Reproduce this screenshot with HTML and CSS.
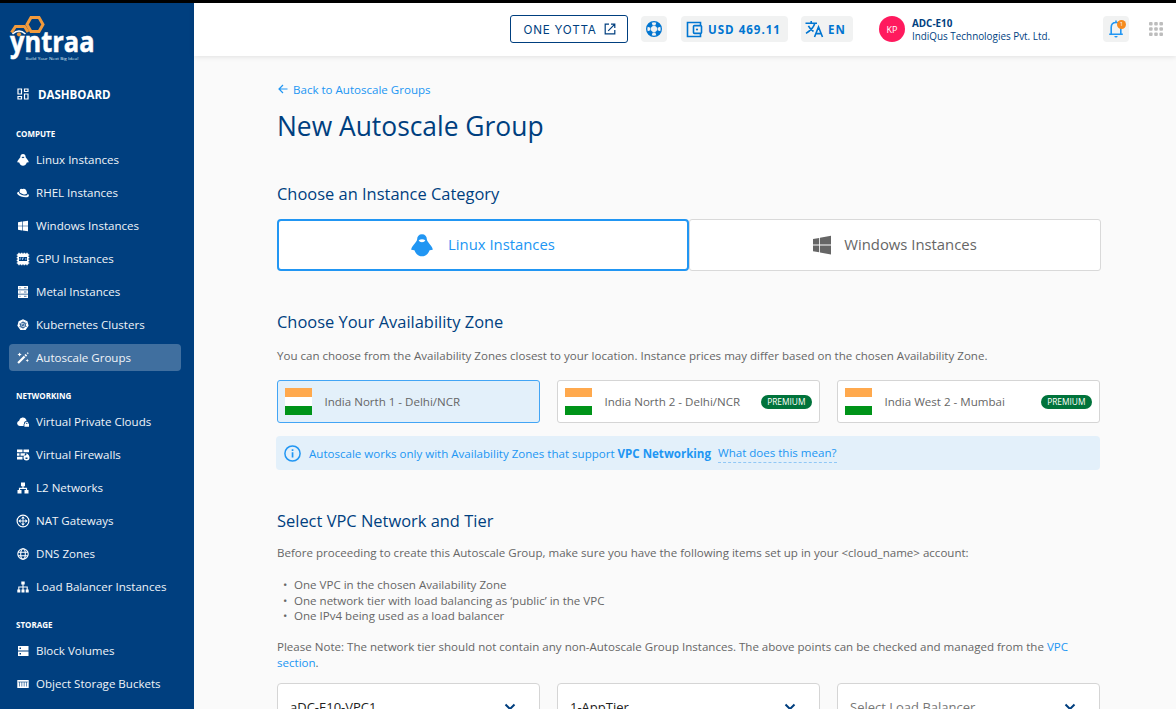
FILE: index.html
```html
<!DOCTYPE html>
<html lang="en">
<head>
<meta charset="utf-8">
<title>New Autoscale Group</title>
<link rel="stylesheet" href="styles.css">
</head>
<body>
<div class="app">
  <aside class="sidebar">
    <svg class="logo" width="90" height="50" viewBox="0 0 90 50" role="img" aria-label="yntraa">
      <text class="logo-word" x="1" y="37.500" textLength="84.500" lengthAdjust="spacingAndGlyphs">yntraa</text>
      <path d="M22 3.500h8l4 7-4 7h-8l-4-7z" fill="none" stroke="#f29a3c" stroke-width="3"/>
      <path d="M2.500 18.500L6.500 12.500h9l3.500 5.500" fill="none" stroke="#f29a3c" stroke-width="3"/>
      <path d="M3.500 20q6.500-6 13 0" fill="none" stroke="#fff" stroke-width="1.500"/>
      <circle cx="10" cy="20.300" r="2.100" fill="#f29a3c"/>
      <text class="logo-tag" x="16.500" y="45.800" textLength="53" lengthAdjust="spacingAndGlyphs">Build Your Next Big Idea!</text>
    </svg>
    <a class="dash"><svg class="ico" viewBox="0 0 12 12"><path d="M1 1h3.500v5H1zM7.500 1H11v2.500H7.500zM7.500 6H11v5H7.500zM1 8.500h3.500V11H1z" fill="none" stroke="#fff" stroke-width="1.200"/></svg><span>DASHBOARD</span></a>

    <h4 class="group">COMPUTE</h4>
    <a class="item"><svg class="ico" viewBox="0 0 12 12"><path fill-rule="evenodd" d="M6 0C4.400 0 3.400 1.200 3.300 3.200 2.600 4.700.5 6 .2 8.200l2 .4C3 10.700 4.300 11.800 6 11.800s3-1.100 3.800-3.200l2-.4C11.500 6 9.400 4.700 8.700 3.200 8.600 1.200 7.600 0 6 0zM4.500 3.100Q6 2.200 7.500 3.100 7 4.200 6 4.200T4.500 3.100z"/></svg><span>Linux Instances</span></a>
    <a class="item"><svg class="ico" viewBox="0 0 12 12"><path d="M3 2.500C4 1 5 2.300 6 2c2-.6 3.500.8 4 4 .2 1.300-2 1.800-4 1.200C4 6.700 2.300 5.600 2.500 4.600z"/><path d="M2 4.700C.3 4.800-.4 6 .6 7.300c1.900 2.400 8.400 4 10.700 2.400 1.200-.9.5-2.400-.7-3 .4 1.700-2 2.300-4.600 1.600C3.500 7.600 1.500 6.200 2 4.700z"/></svg><span>RHEL Instances</span></a>
    <a class="item"><svg class="ico" viewBox="0 0 12 12"><path d="M1 2.200l4-.6v4.100H1zM5.600 1.500L11 .7v5H5.600zM1 6.300h4v4.100l-4-.6zM5.600 6.300H11v5l-5.400-.8z"/></svg><span>Windows Instances</span></a>
    <a class="item"><svg class="ico big" viewBox="0 0 14 14"><path d="M3 .7v12.600M5.700.7v12.600M8.300.7v12.600M11 .7v12.600M.7 3h12.600M.7 5.700h12.600M.7 8.300h12.600M.7 11h12.600" stroke="#fff" stroke-width="1.200"/><rect x="1.500" y="1.500" width="11" height="11" rx="1"/><rect x="3" y="5" width="8" height="4" fill="#003f7f"/><path d="M4 8V6h1.200M6.500 8V6H8M9.800 6v2" fill="none" stroke="#9dc0e4" stroke-width=".9"/></svg><span>GPU Instances</span></a>
    <a class="item"><svg class="ico" viewBox="0 0 12 12"><path d="M1 0h10v3.400H1zM1 4.300h10v3.400H1zM1 8.600h10V12H1z"/><path d="M2.500 1.700h1M7 1.700h2.500M2.500 6h1M7 6h2.500M2.500 10.300h1M7 10.300h2.500" stroke="#003f7f" stroke-width=".7"/></svg><span>Metal Instances</span></a>
    <a class="item"><svg class="ico" viewBox="0 0 12 12"><path d="M6 .3l4.400 2 1.200 4.500-3 4.300H3.400l-3-4.300 1.200-4.500z"/><circle cx="6" cy="6" r="2.700" fill="none" stroke="#003f7f" stroke-width=".7"/><path d="M6 1.800v8.400M2 4.800l8 2.800M2.200 7.800l7.600-3.600M3.500 9.200l5-6.400" stroke="#003f7f" stroke-width=".5"/></svg><span>Kubernetes Clusters</span></a>
    <a class="item active"><svg class="ico" viewBox="0 0 12 12"><path d="M.3 10.200l6.500-6.500 1.600 1.600-6.500 6.500z"/><path d="M7.400 3.100l1.200-1.200 1.600 1.600L9 4.700zM2.600.4l.7 1.400 1.400.7-1.400.7-.7 1.400-.7-1.400L.5 2.500l1.400-.7zM10.300 6.800l.5 1.200 1.200.5-1.200.5-.5 1.200-.5-1.200-1.200-.5 1.200-.5zM10.800 0l.4.800.8.400-.8.400-.4.800-.4-.8-.8-.4.800-.4z"/></svg><span>Autoscale Groups</span></a>

    <h4 class="group">NETWORKING</h4>
    <a class="item"><svg class="ico" viewBox="0 0 12 12"><path d="M6.600 10H2.700a2.700 2.700 0 0 1-.6-5.300A3.800 3.800 0 0 1 9.300 3.800Q9.500 4.500 9.400 4.900 7 5 7 7.700 6.500 8 6.600 10z"/><path fill-rule="evenodd" d="M7.400 7.700h.6c0-2.500 3.400-2.500 3.400 0h.6v3H7.400zM8.800 7.700h1.800c0-1.200-1.800-1.200-1.800 0z"/></svg><span>Virtual Private Clouds</span></a>
    <a class="item"><svg class="ico big" viewBox="0 0 14 14"><path d="M1 1.500h5.500v2.700H1zM7.500 1.500h5.500v2.700H7.500zM1 5.200h2.500v2.600H1zM4.500 5.200h5L8 7.800H4.500zM1 8.800h5.500v2.700H1z"/><path fill-rule="evenodd" d="M10.500 5c2.200 1.700 3 3 3 4.600a3 3 0 0 1-6 0c0-1.200.6-2 1.500-2.600.3.600.7.600.9.500.5-.6.700-1.400.6-2.500zM9.500 9.500v1.600h2V9.500z"/></svg><span>Virtual Firewalls</span></a>
    <a class="item"><svg class="ico" viewBox="0 0 12 12"><path d="M4 .5h4v3.800H4zM.5 8h4v3.500h-4zM7.500 8h4v3.500h-4z"/><path d="M6 4v2.300M2.500 8V6.300h7V8" fill="none" stroke="#fff" stroke-width="1.200"/></svg><span>L2 Networks</span></a>
    <a class="item"><svg class="ico big" viewBox="0 0 14 14"><circle cx="7" cy="7" r="5.900" fill="none" stroke="#fff" stroke-width="1.200"/><path d="M7 2.300l1.900 2.300H5.100zM7 11.700l1.900-2.300H5.100zM2.300 7l2.300-1.900v3.800zM11.700 7L9.400 5.100v3.800z"/><path d="M7 4v6M4 7h6" stroke="#fff" stroke-width=".9"/></svg><span>NAT Gateways</span></a>
    <a class="item"><svg class="ico" viewBox="0 0 12 12"><g fill="none" stroke="#fff" stroke-width="1.100"><circle cx="6" cy="6" r="5.200"/><ellipse cx="6" cy="6" rx="2.300" ry="5.200"/><path d="M1 4.200h10M1 7.800h10"/></g></svg><span>DNS Zones</span></a>
    <a class="item"><svg class="ico" viewBox="0 0 12 12"><path d="M4.300.5h3.400v3H4.300zM.3 8.500h3v3h-3zM4.500 8.500h3v3h-3zM8.700 8.500h3v3h-3z"/><path d="M6 3v6M1.800 9V6h8.400v3" fill="none" stroke="#fff" stroke-width="1.100"/></svg><span>Load Balancer Instances</span></a>

    <h4 class="group">STORAGE</h4>
    <a class="item"><svg class="ico" viewBox="0 0 12 12"><path d="M1 1h10.500v4.500H1zM1 6.500h10.500V11H1z"/><path d="M2.500 2.500H4V4H2.500zM2.500 8H4v1.500H2.500z" fill="#003f7f"/></svg><span>Block Volumes</span></a>
    <a class="item"><svg class="ico" viewBox="0 0 12 12"><path d="M.3 2h11.400v8H.3z"/><path d="M1.300 4h9.400M2.500 4v4.500M4.800 4v4.500M7.200 4v4.500M9.500 4v4.500" stroke="#003f7f" stroke-width=".6"/></svg><span>Object Storage Buckets</span></a>
  </aside>

  <div class="page">
    <header class="topbar">
      <a class="yotta"><span>ONE YOTTA</span><svg width="12" height="12" viewBox="0 0 12 12" fill="none" stroke="#003f7f" stroke-width="1.200"><path d="M5 1.200H1.200v9.600h9.600V7M7 1.200h3.800V5M10.600 1.400L4.200 7.800"/></svg></a>
      <a class="chip help"><svg width="18" height="18" viewBox="0 0 18 18"><circle cx="9" cy="9" r="5.500" fill="none" stroke="#0075d1" stroke-width="5"/><g fill="#f1f2f2"><path d="M6.700 2.700Q9 1.900 11.300 2.700L10.300 5.400H7.700zM6.700 15.300Q9 16.100 11.300 15.300L10.300 12.600H7.700zM2.700 6.700Q1.900 9 2.700 11.300L5.400 10.300V7.700zM15.300 6.700Q16.100 9 15.300 11.300L12.600 10.300V7.700z"/></g><circle cx="9" cy="9" r="2.700" fill="#f1f2f2"/></svg></a>
      <a class="chip wallet"><svg width="17" height="17" viewBox="0 0 17 17" fill="none" stroke="#0075d1" stroke-width="1.600"><path d="M14.500 4V1.500H1.500v14h13V13"/><rect x="7.500" y="4.600" width="8" height="7.800" rx="1"/><circle cx="11" cy="8.500" r="1.100" fill="#0075d1" stroke="none"/></svg><span>USD 469.11</span></a>
      <a class="chip lang"><svg width="19" height="18" viewBox="0 0 19 18" fill="none" stroke="#0075d1" stroke-width="1.600"><path d="M.5 3.300h11.500M6.200 1v2.300M9.800 3.300Q8.500 8.700 1 13.400M3.400 5.800Q5 9 8.500 11.500M9.500 17l4-10 4 10M11 13.600h5.200"/></svg><span>EN</span></a>
      <div class="avatar">KP</div>
      <div class="account"><b>ADC-E10</b><span>IndiQus Technologies Pvt. Ltd.</span></div>
      <a class="chip bell"><svg width="20" height="22" viewBox="0 0 20 22"><path d="M2.200 16.200h13.600M4.200 16V9.500Q4.200 4.500 9 4.500T13.800 9.500V16M9 2.500v2" fill="none" stroke="#2196f3" stroke-width="1.600"/><path d="M7.300 17.900h3.400Q10.500 19.600 9 19.600T7.300 17.900z" fill="#2196f3"/></svg><span class="badge">1</span></a>
      <svg class="dots" width="14" height="14" viewBox="0 0 14 14" fill="#bdbdbd"><rect width="3.600" height="3.600" rx="1"/><rect x="5.200" width="3.600" height="3.600" rx="1"/><rect x="10.400" width="3.600" height="3.600" rx="1"/><rect y="5.200" width="3.600" height="3.600" rx="1"/><rect x="5.200" y="5.200" width="3.600" height="3.600" rx="1"/><rect x="10.400" y="5.200" width="3.600" height="3.600" rx="1"/><rect y="10.400" width="3.600" height="3.600" rx="1"/><rect x="5.200" y="10.400" width="3.600" height="3.600" rx="1"/><rect x="10.400" y="10.400" width="3.600" height="3.600" rx="1"/></svg>
    </header>

    <main class="content">
      <a class="back"><svg width="10" height="10" viewBox="0 0 10 10" fill="none" stroke="#2196f3" stroke-width="1.200"><path d="M9.500 5H1.200M5 1L1 5l4 4"/></svg><span>Back to Autoscale Groups</span></a>
      <h1>New Autoscale Group</h1>

      <h2 class="h-category">Choose an Instance Category</h2>
      <div class="categories">
        <div class="category selected"><svg width="22" height="23" viewBox="0 0 22 23" fill="#2196f3"><path fill-rule="evenodd" d="M11 .3C8 .3 6.200 2.300 6.100 5.600 5.600 8.800.8 11.500.2 15.700l3.200.6C4.800 20 7.500 22.300 11 22.300s6.200-2.300 7.600-6l3.200-.6C21.200 11.500 16.400 8.800 15.900 5.600 15.800 2.300 14 .3 11 .3zM7.600 6.300Q11 4 14.400 6.300 13.500 8.300 11 8.300T7.600 6.300z"/></svg><span>Linux Instances</span></div>
        <div class="category"><svg width="18" height="20" viewBox="0 0 18 20" fill="#666"><path d="M0 4l6.200-1v6.400H0zM7 2.800L18 .8v8.600H7zM0 10.600h6.200v6.600L0 16.200zM7 10.600h11v9L7 17.500z"/></svg><span>Windows Instances</span></div>
      </div>

      <h2 class="h-zone">Choose Your Availability Zone</h2>
      <p class="zone-text">You can choose from the Availability Zones closest to your location. Instance prices may differ based on the chosen Availability Zone.</p>
      <div class="zones">
        <div class="zone selected"><i class="flag"></i><span>India North 1 - Delhi/NCR</span></div>
        <div class="zone"><i class="flag"></i><span>India North 2 - Delhi/NCR</span><em>PREMIUM</em></div>
        <div class="zone"><i class="flag"></i><span>India West 2 - Mumbai</span><em>PREMIUM</em></div>
      </div>
      <div class="notice"><svg width="17" height="17" viewBox="0 0 17 17"><circle cx="8.500" cy="8.500" r="7.600" fill="none" stroke="#2196f3" stroke-width="1.500"/><path d="M7.700 4.300h1.700v1.700H7.700zM7.700 7.300h1.700v5.200H7.700z" fill="#2196f3"/></svg><span class="notice-text">Autoscale works only with Availability Zones that support <b>VPC Networking</b></span><a>What does this mean?</a></div>

      <h2 class="h-vpc">Select VPC Network and Tier</h2>
      <p class="vpc-text">Before proceeding to create this Autoscale Group, make sure you have the following items set up in your &lt;cloud_name&gt; account:</p>
      <ul>
        <li>One VPC in the chosen Availability Zone</li>
        <li>One network tier with load balancing as ‘public’ in the VPC</li>
        <li>One IPv4 being used as a load balancer</li>
      </ul>
      <p class="note">Please Note: The network tier should not contain any non-Autoscale Group Instances. The above points can be checked and managed from the <a>VPC<br>section</a>.</p>
      <div class="selects">
        <div class="select"><span>aDC-E10-VPC1</span><svg width="12" height="8" viewBox="0 0 12 8"><path d="M1.500 1.500L6 6l4.500-4.500" fill="none" stroke="#003f7f" stroke-width="2"/></svg></div>
        <div class="select"><span>1-AppTier</span><svg width="12" height="8" viewBox="0 0 12 8"><path d="M1.500 1.500L6 6l4.500-4.500" fill="none" stroke="#003f7f" stroke-width="2"/></svg></div>
        <div class="select empty"><span>Select Load Balancer</span><svg width="12" height="8" viewBox="0 0 12 8"><path d="M1.500 1.500L6 6l4.500-4.500" fill="none" stroke="#003f7f" stroke-width="2"/></svg></div>
      </div>
    </main>
  </div>
</div>
</body>
</html>
```
FILE: styles.css
```css
* { box-sizing: border-box; }
body { margin: 0; font-family: "Open Sans", "Noto Sans", sans-serif; font-size: 11.550px; color: #666; background: #fafafa; }
h1, h2, h4, p, ul { margin: 0; padding: 0; font-weight: 400; }
svg { flex: none; display: block; }
.app { display: flex; height: 709px; overflow: hidden; border-top: 3px solid #000; }

.sidebar { width: 194px; flex: none; background: #003f7f; color: #fff; }
.logo { margin: 11px 0 0 9px; overflow: visible; }
.logo-word { font: 700 28px "Open Sans", sans-serif; fill: #fff; stroke: #fff; stroke-width: .5px; }
.logo-tag { font: 400 4.300px "Open Sans", sans-serif; fill: #dbe6f0; }
.dash { display: flex; align-items: center; height: 24px; margin-top: 18px; padding-left: 17px; font-size: 11.500px; font-weight: 700; }
.dash span { margin-left: 9px; }
.ico { width: 12px; height: 12px; fill: #fff; }
.ico.big { width: 14px; height: 14px; margin: 0 -1px; }
.group { height: 31px; padding: 12px 0 0 16px; font-size: 8px; line-height: 20px; font-weight: 700; }
.dash + .group { height: 37px; padding-top: 18px; }
.item { display: flex; align-items: center; gap: 7px; height: 33px; padding-left: 17px; line-height: 17px; color: #f0f4f8; }
.item.active { height: 27px; margin: 3px 13px 3px 9px; padding-left: 8px; border-radius: 4px; background: #406f9f; }

.page { flex: 1; min-width: 0; }
.topbar { display: flex; align-items: center; height: 53px; padding: 0 13px 0 316px; background: #fff; box-shadow: 0 1px 5px rgba(0,0,0,.1); }
.yotta { display: flex; align-items: center; gap: 7px; width: 118px; height: 28px; margin-top: -1px; padding-left: 12.500px; border: 1px solid #003f7f; border-radius: 3px; color: #003f7f; font: 400 11.700px Inter, sans-serif; letter-spacing: .75px; white-space: nowrap; }
.yotta span { padding-top: 1px; }
.chip { display: flex; align-items: center; height: 26px; margin-top: -1px; border-radius: 4px; background: #f1f2f2; color: #0075d1; font-weight: 700; font-size: 11.550px; letter-spacing: 1px; }
.help { width: 26px; margin-left: 13px; padding-left: 4px; }
.wallet { width: 107px; margin-left: 14px; padding-left: 5px; gap: 5px; }
.lang { width: 52px; margin-left: 13px; padding-left: 4px; gap: 4px; }
.avatar { width: 26px; height: 26px; margin: -1px 0 0 26px; border-radius: 50%; background: #ff1a5e; color: #fff; font-size: 9px; line-height: 27px; text-align: center; }
.account { display: flex; flex-direction: column; margin-left: 7px; width: 191px; color: #003f7f; font-size: 9.900px; line-height: 13px; }
.bell { position: relative; width: 26px; padding-left: 4px; }
.badge { position: absolute; left: 14px; top: 4px; width: 9px; height: 9px; border-radius: 50%; background: #f58a1f; color: #fff; font-size: 6px; font-weight: 400; line-height: 9px; letter-spacing: 0; text-align: center; }
.dots { margin: -1px 0 0 auto; }

.content { width: 907px; padding: 23px 0 0 83px; }
.back { display: flex; align-items: center; gap: 5px; height: 20px; padding-left: 1px; color: #2196f3; }
h1 { margin-top: 7px; font-size: 26.400px; line-height: 40px; color: #003f7f; }
h2 { font-size: 16.450px; line-height: 24px; color: #003f7f; }
.h-category { margin-top: 36px; }
.categories { display: grid; grid-template-columns: 1fr 1fr; margin-top: 13px; }
.category { display: flex; align-items: center; justify-content: center; gap: 13px; height: 52px; border: 1px solid #d9d9d9; border-radius: 3px; background: #fff; font-size: 14.850px; }
.category span { padding-bottom: 2px; }
.category.selected { gap: 15px; border: 2px solid #2196f3; border-radius: 4px; color: #2196f3; }
.h-zone { margin-top: 39px; }
.zone-text { margin-top: 12px; line-height: 20px; white-space: nowrap; }
.zones, .selects { display: grid; grid-template-columns: repeat(3, 263px); gap: 17px; }
.zones { margin-top: 14px; }
.zone { display: flex; align-items: center; height: 43px; padding: 0 7px; border: 1px solid #d5d5d5; border-radius: 3px; background: #fff; white-space: nowrap; }
.zone.selected { background: #e3f0fa; border-color: #42a5f5; }
.zone em { margin-left: auto; padding: 0 6.500px; border-radius: 7px; background: #00733b; color: #fff; font-size: 8.400px; line-height: 14px; font-style: normal; }
.flag { width: 27px; height: 27px; margin-right: 12.500px; background: linear-gradient(#ffa94d 0 9px, #fff 9px 18px, #009419 18px); }
.notice { display: flex; align-items: center; height: 34px; margin: 13px 1px 0 -1px; padding-left: 8px; border-radius: 4px; background: #e3f0fa; color: #2196f3; white-space: nowrap; }
.notice-text { margin-left: 8px; }
.notice a { margin-left: 7px; padding: 1px 0 2px; border-bottom: 1px dashed #90c8f6; }
.h-vpc { margin-top: 39px; }
.vpc-text { margin-top: 10px; line-height: 20px; white-space: nowrap; }
ul { margin-top: 14px; list-style: none; line-height: 15.700px; }
li { display: flex; }
li::before { content: "•"; width: 11px; margin-left: 6px; }
.note { margin-top: 15px; line-height: 16px; white-space: nowrap; }
.note a { color: #2196f3; }
.selects { margin-top: 12px; }
.select { display: flex; align-items: center; justify-content: space-between; height: 47px; padding: 0 23px 0 12px; border: 1px solid #d5d5d5; border-radius: 4px; background: #fff; color: #222; font-size: 13px; }
.select.empty { color: #777; }
```
